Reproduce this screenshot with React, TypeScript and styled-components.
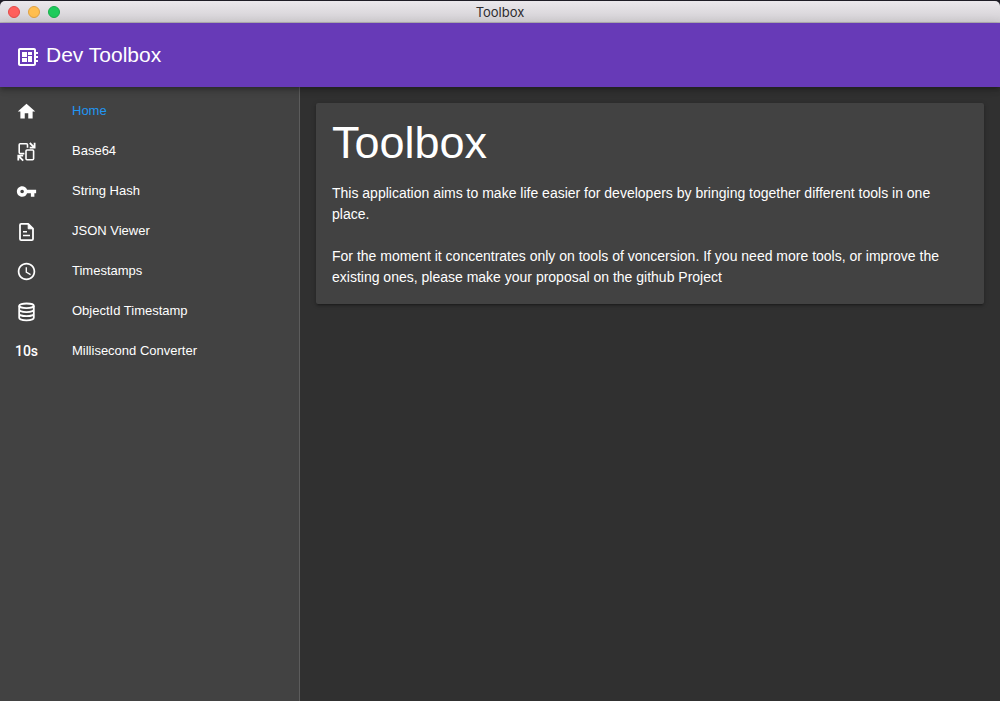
import React from "react";
import styled, { createGlobalStyle } from "styled-components";
import { MdDeveloperBoard, MdHome, MdVpnKey, MdSchedule } from "react-icons/md";

const sans = `"Liberation Sans", Arial, sans-serif`;

const GlobalStyle = createGlobalStyle`
  *, *::before, *::after { box-sizing: border-box; }
  body { margin: 0; background: #1f1d26; color: #fff; font-family: ${sans}; }
`;

const Window = styled.div`
  display: flex;
  flex-direction: column;
  min-height: 100vh;
  padding-top: 1px;
`;

const TitleBar = styled.header`
  display: grid;
  grid-template-columns: 1fr auto 1fr;
  align-items: center;
  height: 22px;
  padding: 0 8px;
  border-bottom: 1px solid #b4b1b5;
  border-radius: 5px 5px 0 0;
  background: linear-gradient(#ebe8ec, #d2cfd3);
`;

const WindowControls = styled.div`
  display: flex;
  gap: 8px;
`;

const WindowButton = styled.button<{ $fill: string; $edge: string }>`
  width: 12px;
  height: 12px;
  padding: 0;
  border: 1px solid ${(p) => p.$edge};
  border-radius: 50%;
  background: ${(p) => p.$fill};
`;

const WindowTitle = styled.span`
  color: #2e2c2f;
  font: 13px/20px Inter, ${sans};
`;

const AppBar = styled.div`
  position: relative;
  z-index: 1;
  display: flex;
  align-items: center;
  gap: 6px;
  height: 64px;
  padding: 0 16px;
  background: #673ab7;
  box-shadow: 0 2px 4px -1px rgba(0, 0, 0, 0.2), 0 4px 5px rgba(0, 0, 0, 0.14), 0 1px 10px rgba(0, 0, 0, 0.12);
`;

const AppIcon = styled(MdDeveloperBoard)`
  width: 24px;
  height: 24px;
  margin-top: 4px;
`;

const AppName = styled.span`
  font-size: 21px;
  line-height: 24px;
`;

const Body = styled.div`
  display: flex;
  flex: 1;
`;

const Sidebar = styled.nav`
  flex: 0 0 300px;
  padding-top: 4px;
  border-right: 1px solid #5c5c5c;
  background: #424242;
`;

const MenuList = styled.ul`
  margin: 0;
  padding: 0;
  list-style: none;
`;

const MenuLink = styled.a<{ $active?: boolean }>`
  display: flex;
  align-items: center;
  gap: 35px;
  height: 40px;
  padding: 0 16px;
  color: ${(p) => (p.$active ? "#2196f3" : "#fff")};
  font-size: 13px;
  line-height: 20px;
  text-decoration: none;
`;

const MenuIcon = styled.span`
  display: flex;
  justify-content: center;
  width: 21px;
  padding-top: 1px;
  color: #fff;

  svg {
    flex: none;
    width: 21px;
    height: 21px;
  }
`;

const UnitMark = styled.span`
  font: 500 14px/21px Roboto, ${sans};
`;

const Main = styled.main`
  flex: 1;
  min-width: 0;
  padding: 16px;
  background: #303030;
`;

const Card = styled.article`
  padding: 16px;
  border-radius: 2px;
  background: #424242;
  box-shadow: 0 1px 5px rgba(0, 0, 0, 0.2), 0 2px 2px rgba(0, 0, 0, 0.14), 0 3px 1px -2px rgba(0, 0, 0, 0.12);
`;

const Heading = styled.h1`
  margin: 0 0 16px;
  font-size: 45px;
  font-weight: 400;
  line-height: 48px;
`;

const Paragraph = styled.p`
  margin: 0;
  font-size: 14px;
  line-height: 21px;

  & + & {
    margin-top: 21px;
  }
`;

const SwapIcon = () => (
  <svg viewBox="0 0 21 21" fill="none" stroke="currentColor" strokeWidth="1.6">
    <path d="M8.400 12.600H4.200a1 1 0 0 1-1-1V3.800a1 1 0 0 1 1-1h6.300a1 1 0 0 1 1 1v3" />
    <rect x="10" y="9" width="7.600" height="9.700" rx="1" />
    <path d="M13.800 2l4.400 4.400M18.600 1.700v4.900h-4.900M7.200 19.600l-4.600-4.600M2.300 19.600v-4.900h4.900" strokeWidth="1.800" />
  </svg>
);

const FileIcon = () => (
  <svg viewBox="0 0 21 21" fill="none" stroke="currentColor" strokeWidth="1.800" strokeLinejoin="round">
    <path d="M5.200 2.900h7l4.800 4.800v10.200a1.200 1.200 0 0 1-1.200 1.200H5.200a1.200 1.200 0 0 1-1.200-1.200V4.100a1.200 1.200 0 0 1 1.200-1.200z" />
    <path d="M12.200 3v4.800H17z" fill="currentColor" strokeWidth="1" />
    <path d="M7 10.700h4M7 14.500h7" strokeWidth="1.600" />
  </svg>
);

const DatabaseIcon = () => (
  <svg viewBox="0 0 21 21" fill="none" stroke="currentColor" strokeWidth="1.800">
    <ellipse cx="10.500" cy="4.800" rx="7.300" ry="2.300" />
    <path d="M3.200 4.800v12c0 1.400 3.200 2.500 7.300 2.500s7.300-1.100 7.300-2.500v-12M3.200 8.600c0 1.400 3.200 2.500 7.300 2.500s7.300-1.100 7.300-2.500M3.200 12.700c0 1.400 3.200 2.500 7.300 2.500s7.300-1.100 7.300-2.500" />
  </svg>
);

const menu = [
  { label: "Home", icon: <MdHome />, active: true },
  { label: "Base64", icon: <SwapIcon /> },
  { label: "String Hash", icon: <MdVpnKey /> },
  { label: "JSON Viewer", icon: <FileIcon /> },
  { label: "Timestamps", icon: <MdSchedule /> },
  { label: "ObjectId Timestamp", icon: <DatabaseIcon /> },
  { label: "Millisecond Converter", icon: <UnitMark>10s</UnitMark> },
];

export default function App() {
  return (
    <Window>
      <GlobalStyle />
      <TitleBar>
        <WindowControls>
          <WindowButton aria-label="Close" $fill="#ff5f5c" $edge="#e24a48" />
          <WindowButton aria-label="Minimize" $fill="#ffbe4f" $edge="#dfa143" />
          <WindowButton aria-label="Zoom" $fill="#1ecb5c" $edge="#18ae4b" />
        </WindowControls>
        <WindowTitle>Toolbox</WindowTitle>
      </TitleBar>
      <AppBar>
        <AppIcon />
        <AppName>Dev Toolbox</AppName>
      </AppBar>
      <Body>
        <Sidebar>
          <MenuList>
            {menu.map((item) => (
              <li key={item.label}>
                <MenuLink href="#" $active={item.active}>
                  <MenuIcon>{item.icon}</MenuIcon>
                  {item.label}
                </MenuLink>
              </li>
            ))}
          </MenuList>
        </Sidebar>
        <Main>
          <Card>
            <Heading>Toolbox</Heading>
            <Paragraph>
              This application aims to make life easier for developers by bringing together different tools in one place.
            </Paragraph>
            <Paragraph>
              For the moment it concentrates only on tools of voncersion. If you need more tools, or improve the
              existing ones, please make your proposal on the github Project
            </Paragraph>
          </Card>
        </Main>
      </Body>
    </Window>
  );
}
